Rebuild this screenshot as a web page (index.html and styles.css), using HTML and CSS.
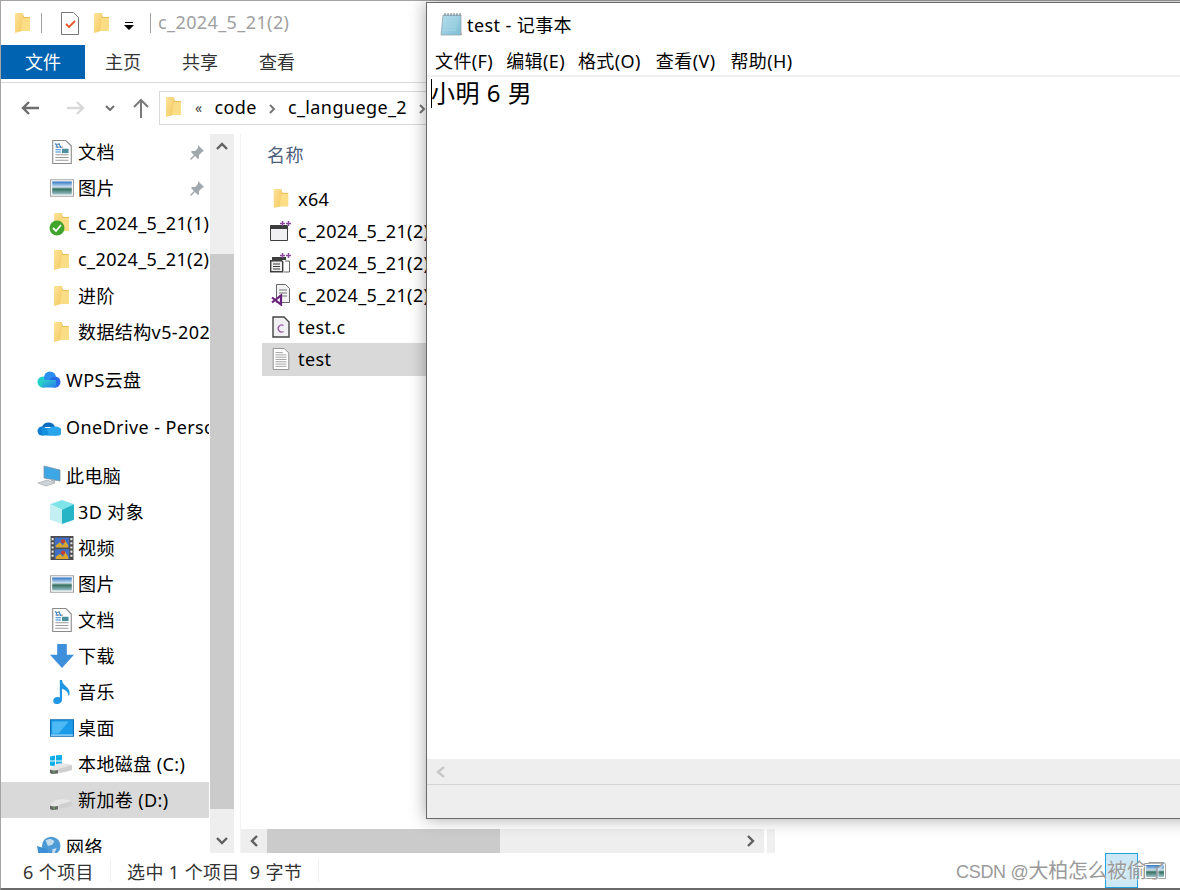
FILE: index.html
```html
<!DOCTYPE html>
<html lang="zh-CN">
<head>
    <meta charset="UTF-8">
    <title>test - 记事本</title>
    <link rel="stylesheet" href="styles.css">
</head>
<body>
    <!-- Icon sprite -->
    <svg class="sprite" width="0" height="0">
        <defs>
            <linearGradient id="folderFront" x1="0" y1="0" x2="1" y2="1">
                <stop offset="0" stop-color="#ffe39a"/>
                <stop offset="1" stop-color="#f3c95f"/>
            </linearGradient>
            <linearGradient id="cloudWps" x1="0" y1="0" x2="1" y2="1">
                <stop offset="0" stop-color="#2cd5c4"/>
                <stop offset="1" stop-color="#2b7df0"/>
            </linearGradient>
            <linearGradient id="landscape" x1="0" y1="0" x2="0" y2="1">
                <stop offset="0" stop-color="#2f72c4"/>
                <stop offset=".42" stop-color="#cfe3ef"/>
                <stop offset=".58" stop-color="#356f5f"/>
                <stop offset="1" stop-color="#9cc3cc"/>
            </linearGradient>
            <linearGradient id="noteBody" x1="0" y1="0" x2="1" y2="1">
                <stop offset="0" stop-color="#b6e0ee"/>
                <stop offset="1" stop-color="#7dbdd4"/>
            </linearGradient>
        </defs>
        <symbol id="i-folder" viewBox="0 0 15 21">
            <path d="M0 1h8l1 3h6v14H0z" fill="#e9bf5c"/>
            <path d="M0 1h8v14l-1 4-7 2z" fill="url(#folderFront)" transform="translate(0 -1)"/>
            <path d="M8 5h7v13H6z" fill="#fbdd85"/>
        </symbol>
        <symbol id="i-doc" viewBox="0 0 18 22">
            <path d="M.5.5h12l5 5v16H.5z" fill="#fff" stroke="#8a8a8a"/>
            <path d="M3 4h4M3 6.500h7M3 16h12M3 18.500h12M3 13.500h12" stroke="#9a9a9a"/>
            <path d="M3 3l2 4M6 3l2 4" stroke="#2f86d6"/>
            <path d="M9 8h6v4H9z" fill="#4d8f9f"/>
            <path d="M3 9h5M3 11h5" stroke="#2f86d6"/>
        </symbol>
        <symbol id="i-picture" viewBox="0 0 22 16">
            <path d="M.5.5h21v15H.5z" fill="#fff" stroke="#a2a2a2"/>
            <path d="M2 2h18v12H2z" fill="url(#landscape)"/>
        </symbol>
        <symbol id="i-pin" viewBox="0 0 16 16">
            <path d="M9 1l6 6-2 1-3 3v3l-1 1-3-3-4 4-1-1 4-4-3-3 1-1h3l3-3z" fill="#a0a7ad"/>
        </symbol>
        <symbol id="i-wps" viewBox="0 0 24 18">
            <circle cx="6" cy="11" r="5.500" fill="#24cfc8"/>
            <circle cx="13" cy="6.500" r="6" fill="#2b8ff2"/>
            <circle cx="18" cy="11" r="5.500" fill="#2a6be8"/>
            <path d="M5 9h14v7.500H5z" fill="url(#cloudWps)"/>
        </symbol>
        <symbol id="i-onedrive" viewBox="0 0 24 16">
            <path d="M5 7a7 7 0 0 1 13 0z" fill="#0b6cc0"/>
            <circle cx="5" cy="11" r="4.500" fill="#0f7fd6"/>
            <circle cx="19" cy="11" r="4.500" fill="#28a8ea"/>
            <path d="M5 8h14v7.500H5z" fill="#1490df"/>
            <path d="M12 15.500h8a4 4 0 0 0 2-8l-7-1-5 3z" fill="#29a5ec"/>
        </symbol>
        <symbol id="i-pc" viewBox="0 0 24 22">
            <path d="M7 1l16 4v11L7 13z" fill="#3ea7e6" stroke="#7e8a92" stroke-width=".7"/>
            <path d="M14 14l4 1v2l-4-1z" fill="#a9b2b8"/>
            <path d="M1 18l9-3 8 3-9 3z" fill="#cfd4d8" stroke="#9aa1a6" stroke-width=".6"/>
        </symbol>
        <symbol id="i-cube" viewBox="0 0 22 22">
            <path d="M11 0l11 4-11 5L0 4z" fill="#7fe3ea"/>
            <path d="M0 4l11 5v13L0 18z" fill="#c3f1f3"/>
            <path d="M22 4l-11 5v13l11-4z" fill="#25b5c6"/>
        </symbol>
        <symbol id="i-video" viewBox="0 0 22 23">
            <path d="M0 0h22v23H0z" fill="#4c4c4c"/>
            <path d="M4 1.500h14v9.500H4z" fill="#3f6fc4"/>
            <path d="M4 12.500h14V22H4z" fill="#3f6fc4"/>
            <path d="M5 9l4-3 3 3 2-5 3 5v2H5zM5 20l4-3 3 3 2-5 3 5v2H5z" fill="#d9a72e"/>
            <circle cx="12" cy="5" r="2" fill="#c7402f"/>
            <circle cx="12" cy="16" r="2" fill="#c7402f"/>
            <path d="M1 2h2v2H1zM1 6h2v2H1zM1 10h2v2H1zM1 14h2v2H1zM1 18h2v2H1zM19 2h2v2h-2zM19 6h2v2h-2zM19 10h2v2h-2zM19 14h2v2h-2zM19 18h2v2h-2z" fill="#e4e4e4"/>
        </symbol>
        <symbol id="i-download" viewBox="0 0 20 20">
            <path d="M6 0h8v9h6L10 20 0 9h6z" fill="#3d8fdc"/>
        </symbol>
        <symbol id="i-music" viewBox="0 0 18 22">
            <path d="M7 0h2c0 5 7 6 7 12 0 1-.5 2-1 3 0-4-3-6-6-7v10c0 3-3 4-5 4s-3-1-3-3c0-3 3-4 6-3z" fill="#1f97e3"/>
        </symbol>
        <symbol id="i-desktop" viewBox="0 0 22 16">
            <path d="M.5.500h21v15H.5z" fill="#1a9bea" stroke="#0f6fb0"/>
            <path d="M2 2h15L8 13H2z" fill="#4dbaf5"/>
            <path d="M1 14h20v1H1z" fill="#bfe6fb"/>
        </symbol>
        <symbol id="i-drive" viewBox="0 0 22 12">
            <path d="M0 7L6 2Q14 0 22 3v5q-10 3-20 4l-2-1z" fill="#e6e6e6"/>
            <path d="M22 3v5q-6 2-13 3l-1-4z" fill="#cfcfcf"/>
            <path d="M0 7.500q3 1.500 8 .5v3.400L2 12l-2-1z" fill="#666"/>
            <path d="M3 9.500h2v1H3z" fill="#57c24f"/>
        </symbol>
        <symbol id="i-windows" viewBox="0 0 12 12">
            <path d="M0 1.500l5-1V5.500H0zM6 .3L12 0v5.500H6zM0 6.500h5v5l-5-1zM6 6.500h6V12l-6-.5z" fill="#12aee8"/>
        </symbol>
        <symbol id="i-network" viewBox="0 0 22 20">
            <circle cx="13" cy="9" r="8.500" fill="#4d9bd6"/>
            <path d="M8 4c3-2 6-2 8 1l-2 3-4 1zM14 12l4-1-2 5-2 0z" fill="#c6dbe9"/>
            <path d="M0 9l10 3v8H2z" fill="#3b8fd6"/>
        </symbol>
        <symbol id="i-exe" viewBox="0 0 22 20">
            <path d="M.5 4.500h17v15H.5z" fill="#f1f1f4" stroke="#3d3d3d"/>
            <path d="M1 5h16v3H1z" fill="#3d3d3d"/>
            <path d="M10 2.500h5M12.500 0v5M16 2.500h5M18.500 0v5" stroke="#8c4a9e" stroke-width="1.400"/>
        </symbol>
        <symbol id="i-pdb" viewBox="0 0 22 20">
            <path d="M2 4h14v3H2z" fill="#3d3d3d"/>
            <path d="M.7 7.700h11l1 1v10h-12z" fill="#eee" stroke="#3d3d3d" stroke-width="1.400"/>
            <path d="M3 11h7M3 13.500h7M3 16h7" stroke="#3d3d3d"/>
            <path d="M15 8h4.500v11H14" fill="none" stroke="#666"/>
            <path d="M10 2.500h5M12.500 0v5M16 2.500h5M18.500 0v5" stroke="#8c4a9e" stroke-width="1.400"/>
        </symbol>
        <symbol id="i-vcx" viewBox="0 0 20 22">
            <path d="M5.500.5h9l4 4v14h-13z" fill="#f3f3f3" stroke="#666"/>
            <path d="M8 6h8M8 9h8M8 12h8" stroke="#777"/>
            <path d="M1 13.500l9 7V11.500l-9 7" fill="none" stroke="#68217a" stroke-width="2.200"/>
        </symbol>
        <symbol id="i-cfile" viewBox="0 0 18 22">
            <path d="M1 1h11l5 5v15H1z" fill="#f1f1f4" stroke="#444" stroke-width="1.400"/>
            <path d="M11.500 9.500a3.500 3.500 0 1 0 0 6" fill="none" stroke="#9b5aa8" stroke-width="1.300"/>
        </symbol>
        <symbol id="i-text" viewBox="0 0 18 24">
            <path d="M.5.500h12l5 5v18H.5z" fill="#fff" stroke="#8a8a8a"/>
            <path d="M3 5h8M3 7.500h12M3 10h12M3 12.500h12M3 15h12M3 17.500h12M3 20h12" stroke="#9a9a9a"/>
        </symbol>
        <symbol id="i-notepad" viewBox="0 0 23 24">
            <path d="M4 3h18v20H2z" fill="url(#noteBody)" stroke="#8d9ba3" stroke-width=".7"/>
            <path d="M2 23h20l1-3v3z" fill="#b49b6d"/>
            <path d="M6 6h13M5.500 9h13M5 12h13M4.500 15h13M4 18h13" stroke="#a5d5e4"/>
            <path d="M6 1v3M9 1v3M12 1v3M15 1v3M18 1v3M21 1v3" stroke="#6a7c86"/>
        </symbol>
        <symbol id="i-check" viewBox="0 0 18 23">
            <path d="M.5.500h12l5 5v17H.5z" fill="#fff" stroke="#777"/>
            <path d="M5 12l3 3 6-6" fill="none" stroke="#e8552a" stroke-width="1.800"/>
        </symbol>
    </svg>

    <div class="explorer">
        <div class="titlebar">
            <svg class="ic folder-ic"><use href="#i-folder"/></svg>
            <span class="title-sep"></span>
            <svg class="ic check-ic"><use href="#i-check"/></svg>
            <svg class="ic folder-ic qa-folder"><use href="#i-folder"/></svg>
            <svg class="qa-drop" viewBox="0 0 10 8" width="10" height="8"><path d="M1 0h8v1H1zM0 3h10L5 8z" fill="#000"/></svg>
            <span class="title-sep second"></span>
            <span class="title-text">c_2024_5_21(2)</span>
        </div>

        <div class="ribbon">
            <div class="tab active">文件</div>
            <div class="tab">主页</div>
            <div class="tab">共享</div>
            <div class="tab">查看</div>
        </div>

        <div class="addressbar">
            <svg class="nav-arrow" viewBox="0 0 20 16" width="20" height="16"><path d="M19 8H3M9 2L3 8l6 6" fill="none" stroke="#6e6e6e" stroke-width="2.400"/></svg>
            <svg class="nav-arrow fwd" viewBox="0 0 20 16" width="20" height="16"><path d="M1 8h16M11 2l6 6-6 6" fill="none" stroke="#d8d8d8" stroke-width="2.400"/></svg>
            <svg class="nav-down" viewBox="0 0 10 6" width="10" height="6"><path d="M1 1l4 4 4-4" fill="none" stroke="#6e6e6e" stroke-width="2"/></svg>
            <svg class="nav-up" viewBox="0 0 16 20" width="16" height="20"><path d="M8 20V2M1 9l7-7 7 7" fill="none" stroke="#7a7a7a" stroke-width="2"/></svg>
            <div class="crumbs">
                <svg class="ic folder-ic"><use href="#i-folder"/></svg>
                <span class="crumb-more">«</span>
                <span class="crumb">code</span>
                <svg class="crumb-sep" viewBox="0 0 7 10" width="7" height="10"><path d="M1 1l4 4-4 4" fill="none" stroke="#777" stroke-width="2"/></svg>
                <span class="crumb">c_languege_2</span>
                <svg class="crumb-sep" viewBox="0 0 7 10" width="7" height="10"><path d="M1 1l4 4-4 4" fill="none" stroke="#777" stroke-width="2"/></svg>
            </div>
        </div>

        <div class="content">
            <!-- Left navigation pane -->
            <nav class="navpane">
                <div class="nav-row sub"><svg class="ic nav-ic doc"><use href="#i-doc"/></svg><span class="nav-label">文档</span><svg class="pin"><use href="#i-pin"/></svg></div>
                <div class="nav-row sub"><svg class="ic nav-ic pic"><use href="#i-picture"/></svg><span class="nav-label">图片</span><svg class="pin"><use href="#i-pin"/></svg></div>
                <div class="nav-row sub">
                    <span class="nav-ic-wrap">
                        <svg class="ic folder-ic"><use href="#i-folder"/></svg>
                        <svg class="sync-badge" viewBox="0 0 16 16"><circle cx="8" cy="8" r="7.500" fill="#3fa52c"/><path d="M4 8l3 3 5-6" fill="none" stroke="#fff" stroke-width="1.800"/></svg>
                    </span>
                    <span class="nav-label">c_2024_5_21(1)</span>
                </div>
                <div class="nav-row sub"><svg class="ic nav-ic folder-ic"><use href="#i-folder"/></svg><span class="nav-label">c_2024_5_21(2)</span></div>
                <div class="nav-row sub"><svg class="ic nav-ic folder-ic"><use href="#i-folder"/></svg><span class="nav-label">进阶</span></div>
                <div class="nav-row sub"><svg class="ic nav-ic folder-ic"><use href="#i-folder"/></svg><span class="nav-label">数据结构v5-202</span></div>

                <div class="nav-row top gap"><svg class="ic top-ic"><use href="#i-wps"/></svg><span class="nav-label">WPS云盘</span></div>
                <div class="nav-row top gap"><svg class="ic top-ic"><use href="#i-onedrive"/></svg><span class="nav-label">OneDrive - Personal</span></div>
                <div class="nav-row top gap"><svg class="ic top-ic"><use href="#i-pc"/></svg><span class="nav-label">此电脑</span></div>

                <div class="nav-row sub"><svg class="ic nav-ic pic"><use href="#i-cube"/></svg><span class="nav-label">3D 对象</span></div>
                <div class="nav-row sub"><svg class="ic nav-ic pic"><use href="#i-video"/></svg><span class="nav-label">视频</span></div>
                <div class="nav-row sub"><svg class="ic nav-ic pic"><use href="#i-picture"/></svg><span class="nav-label">图片</span></div>
                <div class="nav-row sub"><svg class="ic nav-ic doc"><use href="#i-doc"/></svg><span class="nav-label">文档</span></div>
                <div class="nav-row sub"><svg class="ic nav-ic doc"><use href="#i-download"/></svg><span class="nav-label">下载</span></div>
                <div class="nav-row sub"><svg class="ic nav-ic doc"><use href="#i-music"/></svg><span class="nav-label">音乐</span></div>
                <div class="nav-row sub"><svg class="ic nav-ic pic"><use href="#i-desktop"/></svg><span class="nav-label">桌面</span></div>
                <div class="nav-row sub">
                    <span class="nav-ic-wrap">
                        <svg class="win-badge"><use href="#i-windows"/></svg>
                        <svg class="drive-ic"><use href="#i-drive"/></svg>
                    </span>
                    <span class="nav-label">本地磁盘 (C:)</span>
                </div>
                <div class="nav-row sub selected">
                    <span class="nav-ic-wrap"><svg class="drive-ic"><use href="#i-drive"/></svg></span>
                    <span class="nav-label">新加卷 (D:)</span>
                </div>
                <div class="nav-row top gap-small"><svg class="ic top-ic"><use href="#i-network"/></svg><span class="nav-label">网络</span></div>
            </nav>

            <div class="vscroll">
                <div class="vscroll-btn"><svg viewBox="0 0 12 8" width="12" height="8"><path d="M1 7l5-5 5 5" fill="none" stroke="#606060" stroke-width="2.400"/></svg></div>
                <div class="vscroll-space top"></div>
                <div class="vscroll-thumb"></div>
                <div class="vscroll-space"></div>
                <div class="vscroll-btn"><svg viewBox="0 0 12 8" width="12" height="8"><path d="M1 1l5 5 5-5" fill="none" stroke="#606060" stroke-width="2.400"/></svg></div>
            </div>

            <!-- File list -->
            <div class="filepane">
                <div class="file-list">
                    <div class="col-head">名称</div>
                    <div class="file-row"><svg class="ic file-ic folder-file"><use href="#i-folder"/></svg><span>x64</span></div>
                    <div class="file-row"><svg class="ic file-ic"><use href="#i-exe"/></svg><span>c_2024_5_21(2)</span></div>
                    <div class="file-row"><svg class="ic file-ic"><use href="#i-pdb"/></svg><span>c_2024_5_21(2)</span></div>
                    <div class="file-row"><svg class="ic file-ic"><use href="#i-vcx"/></svg><span>c_2024_5_21(2)</span></div>
                    <div class="file-row"><svg class="ic file-ic"><use href="#i-cfile"/></svg><span>test.c</span></div>
                    <div class="file-row selected"><svg class="ic file-ic"><use href="#i-text"/></svg><span>test</span></div>
                </div>
                <div class="hscroll-wrap">
                    <div class="hscroll">
                        <div class="hscroll-btn"><svg viewBox="0 0 8 12" width="8" height="12"><path d="M7 1L2 6l5 5" fill="none" stroke="#606060" stroke-width="2.400"/></svg></div>
                        <div class="hscroll-thumb"></div>
                        <div class="hscroll-space"></div>
                        <div class="hscroll-btn"><svg viewBox="0 0 8 12" width="8" height="12"><path d="M1 1l5 5-5 5" fill="none" stroke="#606060" stroke-width="2.400"/></svg></div>
                    </div>
                    <div class="hscroll-end"></div>
                </div>
            </div>
        </div>

        <div class="statusbar">
            <span class="status-count">6 个项目</span>
            <span class="status-sep"></span>
            <span class="status-sel">选中 1 个项目</span>
            <span class="status-size">9 字节</span>
            <span class="status-sep"></span>
            <div class="view-btns">
                <div class="view-btn active"></div>
                <div class="view-btn"><svg class="view-pic"><use href="#i-picture"/></svg></div>
            </div>
        </div>
    </div>

    <!-- Notepad window floating over the explorer -->
    <div class="notepad">
        <div class="np-title">
            <svg class="np-icon"><use href="#i-notepad"/></svg>
            <span>test - 记事本</span>
        </div>
        <div class="np-menu">
            <span class="np-menu-item">文件(F)</span>
            <span class="np-menu-item">编辑(E)</span>
            <span class="np-menu-item wide">格式(O)</span>
            <span class="np-menu-item wide">查看(V)</span>
            <span class="np-menu-item">帮助(H)</span>
        </div>
        <div class="np-text"><span class="caret"></span>小明 6 男</div>
        <div class="np-scroll"><svg viewBox="0 0 9 12" width="9" height="12"><path d="M8 1L2 6l6 5" fill="none" stroke="#c8c8c8" stroke-width="2.400"/></svg></div>
        <div class="np-status"></div>
    </div>

    <div class="watermark"><span class="wm-latin">CSDN @</span>大柏怎么被偷了</div>
</body>
</html>
```

FILE: styles.css
```css
/* General styles */
html, body {
    margin: 0;
    padding: 0;
    height: 890px;
    overflow: hidden;
}

body {
    position: relative;
    background: #fff;
    color: #000;
    font-family: "Noto Sans", "Noto Sans CJK SC", sans-serif;
    font-size: 18px;
    letter-spacing: 0.4px;
}

.sprite {
    position: absolute;
}

.ic {
    display: block;
    flex: none;
}

.folder-ic {
    width: 15px;
    height: 21px;
}

/* Explorer window */
.explorer {
    height: 890px;
    box-sizing: border-box;
    border-top: 1px solid #a5a5a5;
    border-left: 1px solid #a5a5a5;
    border-bottom: 2px solid #6a6a6a;
    display: flex;
    flex-direction: column;
}

.titlebar {
    height: 44px;
    flex: none;
    display: flex;
    align-items: center;
    padding-left: 14px;
}

.title-sep {
    width: 1px;
    height: 20px;
    margin-left: 11px;
    background: #a0a0a0;
}

.title-sep.second {
    margin-left: 16px;
}

.check-ic {
    width: 18px;
    height: 23px;
    margin-left: 19px;
}

.qa-folder {
    margin-left: 15px;
}

.qa-drop {
    margin-left: 15px;
    margin-top: 6px;
}

.title-text {
    margin-left: 7px;
    margin-top: -2px;
    color: #a0a0a0;
}

/* Ribbon */
.ribbon {
    height: 37px;
    flex: none;
    display: flex;
    border-bottom: 1px solid #dcdcdc;
}

.tab {
    width: 36px;
    height: 34px;
    line-height: 34px;
    margin-left: 41px;
    color: #333;
    white-space: nowrap;
    letter-spacing: 0;
}

.tab:nth-child(2) {
    margin-left: 20px;
}

.tab.active {
    width: 84px;
    margin-left: 0;
    background: #0063b1;
    color: #fff;
    text-align: center;
}

/* Address bar */
.addressbar {
    height: 49px;
    padding-bottom: 2px;
    flex: none;
    display: flex;
    align-items: center;
    padding-left: 19px;
    overflow: hidden;
}

.nav-arrow.fwd {
    margin-left: 26px;
}

.nav-down {
    margin-left: 19px;
}

.nav-up {
    margin-left: 18px;
}

.crumbs {
    height: 32px;
    margin-left: 10px;
    padding-left: 6px;
    flex: 1;
    display: flex;
    align-items: center;
    border: 1px solid #d9d9d9;
    border-right: none;
}

.crumb {
    margin-top: -2px;
}

.crumb-more {
    margin-left: 14px;
    margin-right: 12px;
    font-size: 14px;
    color: #444;
}

.crumb-sep {
    margin: 2px 12px 0;
}

/* Main area */
.content {
    flex: 1;
    min-height: 0;
    display: flex;
}

.navpane {
    width: 208px;
    margin-right: 1px;
    flex: none;
    overflow: hidden;
}

.nav-row {
    height: 36px;
    display: flex;
    align-items: center;
    white-space: nowrap;
    overflow: hidden;
    position: relative;
}

.nav-row.sub {
    padding-left: 49px;
}

.nav-row.top {
    padding-left: 36px;
}

.nav-row.gap {
    margin-top: 12px;
}

.nav-row.gap-small {
    margin-top: 11px;
}

.nav-row.selected {
    background: #d9d9d9;
}

.nav-ic {
    width: 24px;
    height: 24px;
    margin-right: 4px;
}

.nav-ic.folder-ic {
    width: 15px;
    height: 21px;
    margin-left: 4px;
    margin-right: 9px;
}

.nav-ic-wrap {
    position: relative;
    width: 24px;
    height: 24px;
    margin-right: 4px;
    flex: none;
}

.nav-ic-wrap .folder-ic {
    margin-left: 4px;
    margin-top: 1px;
}

.sync-badge {
    position: absolute;
    left: -1px;
    top: 8px;
    width: 16px;
    height: 16px;
}

.win-badge {
    position: absolute;
    left: 0;
    top: 3px;
    width: 12px;
    height: 12px;
}

.drive-ic {
    position: absolute;
    left: 0;
    top: 10px;
    width: 22px;
    height: 12px;
}

.top-ic {
    width: 24px;
    height: 22px;
    margin-right: 5px;
}

.nav-label {
    flex: none;
    margin-top: -2px;
}

.pin {
    position: absolute;
    left: 188px;
    top: 10px;
    width: 16px;
    height: 16px;
}

/* Scrollbars */
.vscroll {
    width: 24px;
    flex: none;
    background: #eee;
    display: flex;
    flex-direction: column;
}

.vscroll-btn {
    height: 24px;
    flex: none;
    display: flex;
    align-items: center;
    justify-content: center;
}

.vscroll-space {
    height: 20px;
}

.vscroll-space.top {
    height: 96px;
}

.vscroll-thumb {
    height: 555px;
    background: #cbcbcb;
}

.filepane {
    flex: 1;
    min-width: 0;
    display: flex;
    flex-direction: column;
    margin-left: 6px;
    border-left: 1px solid #f3f3f3;
}

.file-list {
    flex: 1;
    padding-left: 21px;
}

.col-head {
    height: 49px;
    line-height: 42px;
    padding-left: 5px;
    color: #4c607a;
}

.file-row {
    height: 32px;
    display: flex;
    align-items: center;
    padding-left: 8px;
    white-space: nowrap;
}

.file-row.selected {
    padding-bottom: 1px;
    background: #d9d9d9;
}

.file-ic {
    width: 22px;
    height: 22px;
    margin-right: 6px;
}

.file-ic.folder-file {
    height: 20px;
}

.hscroll-wrap {
    height: 24px;
    flex: none;
    display: flex;
}

.hscroll {
    width: 523px;
    display: flex;
    background: #eee;
    flex: none;
}

.hscroll-btn {
    width: 26px;
    flex: none;
    display: flex;
    align-items: center;
    justify-content: center;
}

.hscroll-thumb {
    width: 233px;
    background: #cbcbcb;
}

.hscroll-space {
    flex: 1;
}

.hscroll-end {
    width: 8px;
    margin-left: 3px;
    background: #f0f0f0;
}

/* Status bar */
.statusbar {
    height: 35px;
    flex: none;
    display: flex;
    align-items: center;
    color: #333;
    white-space: nowrap;
}

.status-count {
    margin-left: 22px;
}

.status-sep {
    width: 1px;
    height: 22px;
    margin-left: 16px;
    background: #f0f0f0;
}

.status-sel {
    margin-left: 16px;
}

.status-size {
    margin-left: 10px;
}

.view-btns {
    margin-left: auto;
    margin-right: 9px;
    display: flex;
    align-self: stretch;
}

.view-btn {
    width: 33px;
    box-sizing: border-box;
    display: flex;
    align-items: center;
    justify-content: center;
}

.view-btn.active {
    background: #cce8f7;
    border: 1px solid #26a0da;
}

.view-pic {
    width: 22px;
    height: 16px;
}

/* Notepad window */
.notepad {
    position: absolute;
    left: 426px;
    top: 2px;
    width: 770px;
    height: 817px;
    box-sizing: border-box;
    background: #fff;
    border: 1px solid #6a6a6a;
    box-shadow: 0 0 16px rgba(0, 0, 0, 0.35);
    display: flex;
    flex-direction: column;
}

.np-title {
    height: 41px;
    padding-bottom: 4px;
    flex: none;
    display: flex;
    align-items: center;
    padding-left: 12px;
}

.np-icon {
    width: 23px;
    height: 24px;
    margin-right: 5px;
}

.np-menu {
    height: 23px;
    padding-bottom: 4px;
    flex: none;
    display: flex;
    align-items: center;
    padding-left: 8px;
    border-bottom: 2px solid #f0f0f0;
    white-space: nowrap;
}

.np-menu-item {
    margin-right: 13px;
}

.np-menu-item.wide {
    margin-right: 15px;
}

.np-text {
    flex: 1;
    position: relative;
    padding-left: 4px;
    font-size: 24px;
    line-height: 32px;
    letter-spacing: 0.5px;
}

.caret {
    position: absolute;
    left: 4px;
    top: 2px;
    width: 1px;
    height: 29px;
    background: #000;
}

.np-scroll {
    height: 25px;
    flex: none;
    background: #eee;
    display: flex;
    align-items: center;
    padding-left: 9px;
}

.np-status {
    height: 33px;
    flex: none;
    background: #eee;
    border-top: 1px solid #d4d4d4;
}

/* Watermark */
.watermark {
    position: absolute;
    left: 956px;
    top: 857px;
    font-family: "Liberation Sans", "Noto Sans CJK SC", sans-serif;
    font-size: 20px;
    line-height: 28px;
    letter-spacing: -0.3px;
    color: #9a9a9a;
    text-shadow: 1px 1px 1px rgba(255, 255, 255, 0.7);
    white-space: nowrap;
}

.wm-latin {
    font-size: 18px;
}
```
